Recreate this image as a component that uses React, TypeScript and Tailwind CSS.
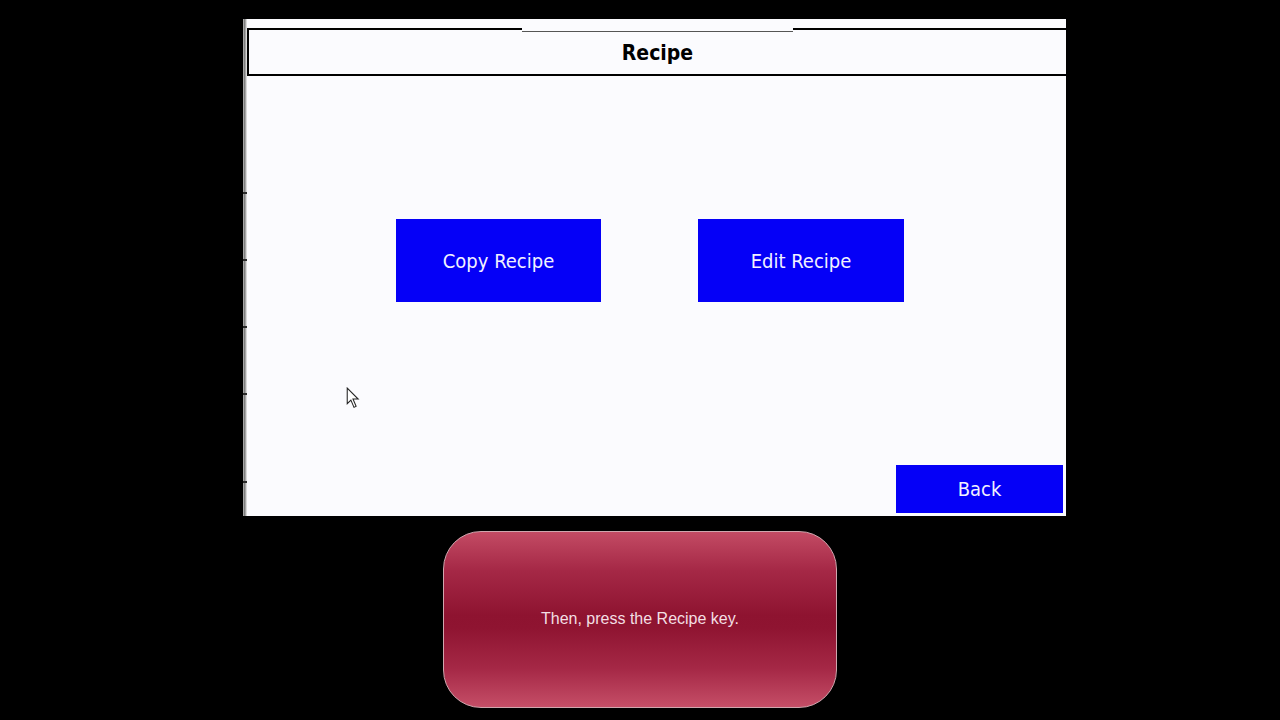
export default function App() {
  const ticks = [192, 259, 326, 393, 481];
  const hmi = { fontFamily: '"DejaVu Sans Condensed", "DejaVu Sans", "Liberation Sans", sans-serif', fontStretch: 'condensed' as const };

  return (
    <div className="w-[1280px] h-[720px] bg-black flex flex-col overflow-hidden">
      {/* HMI screen */}
      <div className="ml-[243px] mt-[19px] w-[823px] h-[497px] flex">
        {/* left frame bar */}
        <svg width="4" height="497" className="shrink-0 block">
          <rect x="0" y="0" width="4" height="497" fill="#a6a6a6" />
          <rect x="1" y="0" width="1" height="497" fill="#7d7d7d" />
          <rect x="3" y="0" width="1" height="497" fill="#d9d9d9" />
          {ticks.map((t) => (
            <rect key={t} x="0" y={t - 19} width="4" height="2" fill="#2a2a2a" />
          ))}
        </svg>

        <div className="flex-1 bg-[#fbfbfe] flex flex-col relative">
          {/* header */}
          <div className="mt-[9px] h-[48px] border-2 border-r-0 border-black flex items-center justify-center relative">
            <div className="absolute left-[273px] top-[-2px] w-[271px] h-[4px] bg-[#fbfbfe] border-b border-[#555]" />
            <span className="text-[21px] font-bold text-black leading-none pt-[2px]" style={hmi}>
              Recipe
            </span>
          </div>

          {/* main buttons */}
          <div className="mt-[143px] ml-[149px] flex gap-[97px]">
            <button
              className="w-[205px] h-[83px] bg-[#0500f7] text-[#f2f2ff] text-[20px] flex items-center justify-center pt-[1px]"
              style={hmi}
            >
              Copy Recipe
            </button>
            <button
              className="w-[206px] h-[83px] bg-[#0500f7] text-[#f2f2ff] text-[20px] flex items-center justify-center pt-[1px]"
              style={hmi}
            >
              Edit Recipe
            </button>
          </div>

          {/* cursor */}
          <svg
            width="15"
            height="23"
            viewBox="0 0 14 22"
            className="absolute left-[99px] top-[368px]"
          >
            <path d="M1 1 L1 16 L4.5 12.5 L7.5 19.5 L9.5 18.5 L6.5 11.5 L11.5 11.5 Z" fill="#fff" stroke="#222" strokeWidth="1" strokeLinejoin="miter" />
          </svg>

          {/* back */}
          <div className="mt-auto mb-[3px] mr-[3px] flex justify-end">
            <button
              className="w-[167px] h-[48px] bg-[#0500f7] text-[#f2f2ff] text-[20px] flex items-center justify-center"
              style={hmi}
            >
              Back
            </button>
          </div>
        </div>
      </div>

      {/* instruction box */}
      <div className="mt-[15px] ml-[443px] w-[394px] h-[177px] rounded-[38px] border border-[#cfa6ae] bg-[linear-gradient(to_bottom,#c34b64_0%,#a52846_22%,#8e1330_48%,#8f1431_55%,#a52846_78%,#c54e67_100%)] flex items-center justify-center">
        <span
          className="text-[16px] text-[#f3dfe3] pb-[2px]"
          style={{ fontFamily: '"Liberation Sans", Arial, sans-serif' }}
        >
          Then, press the Recipe key.
        </span>
      </div>
    </div>
  );
}
